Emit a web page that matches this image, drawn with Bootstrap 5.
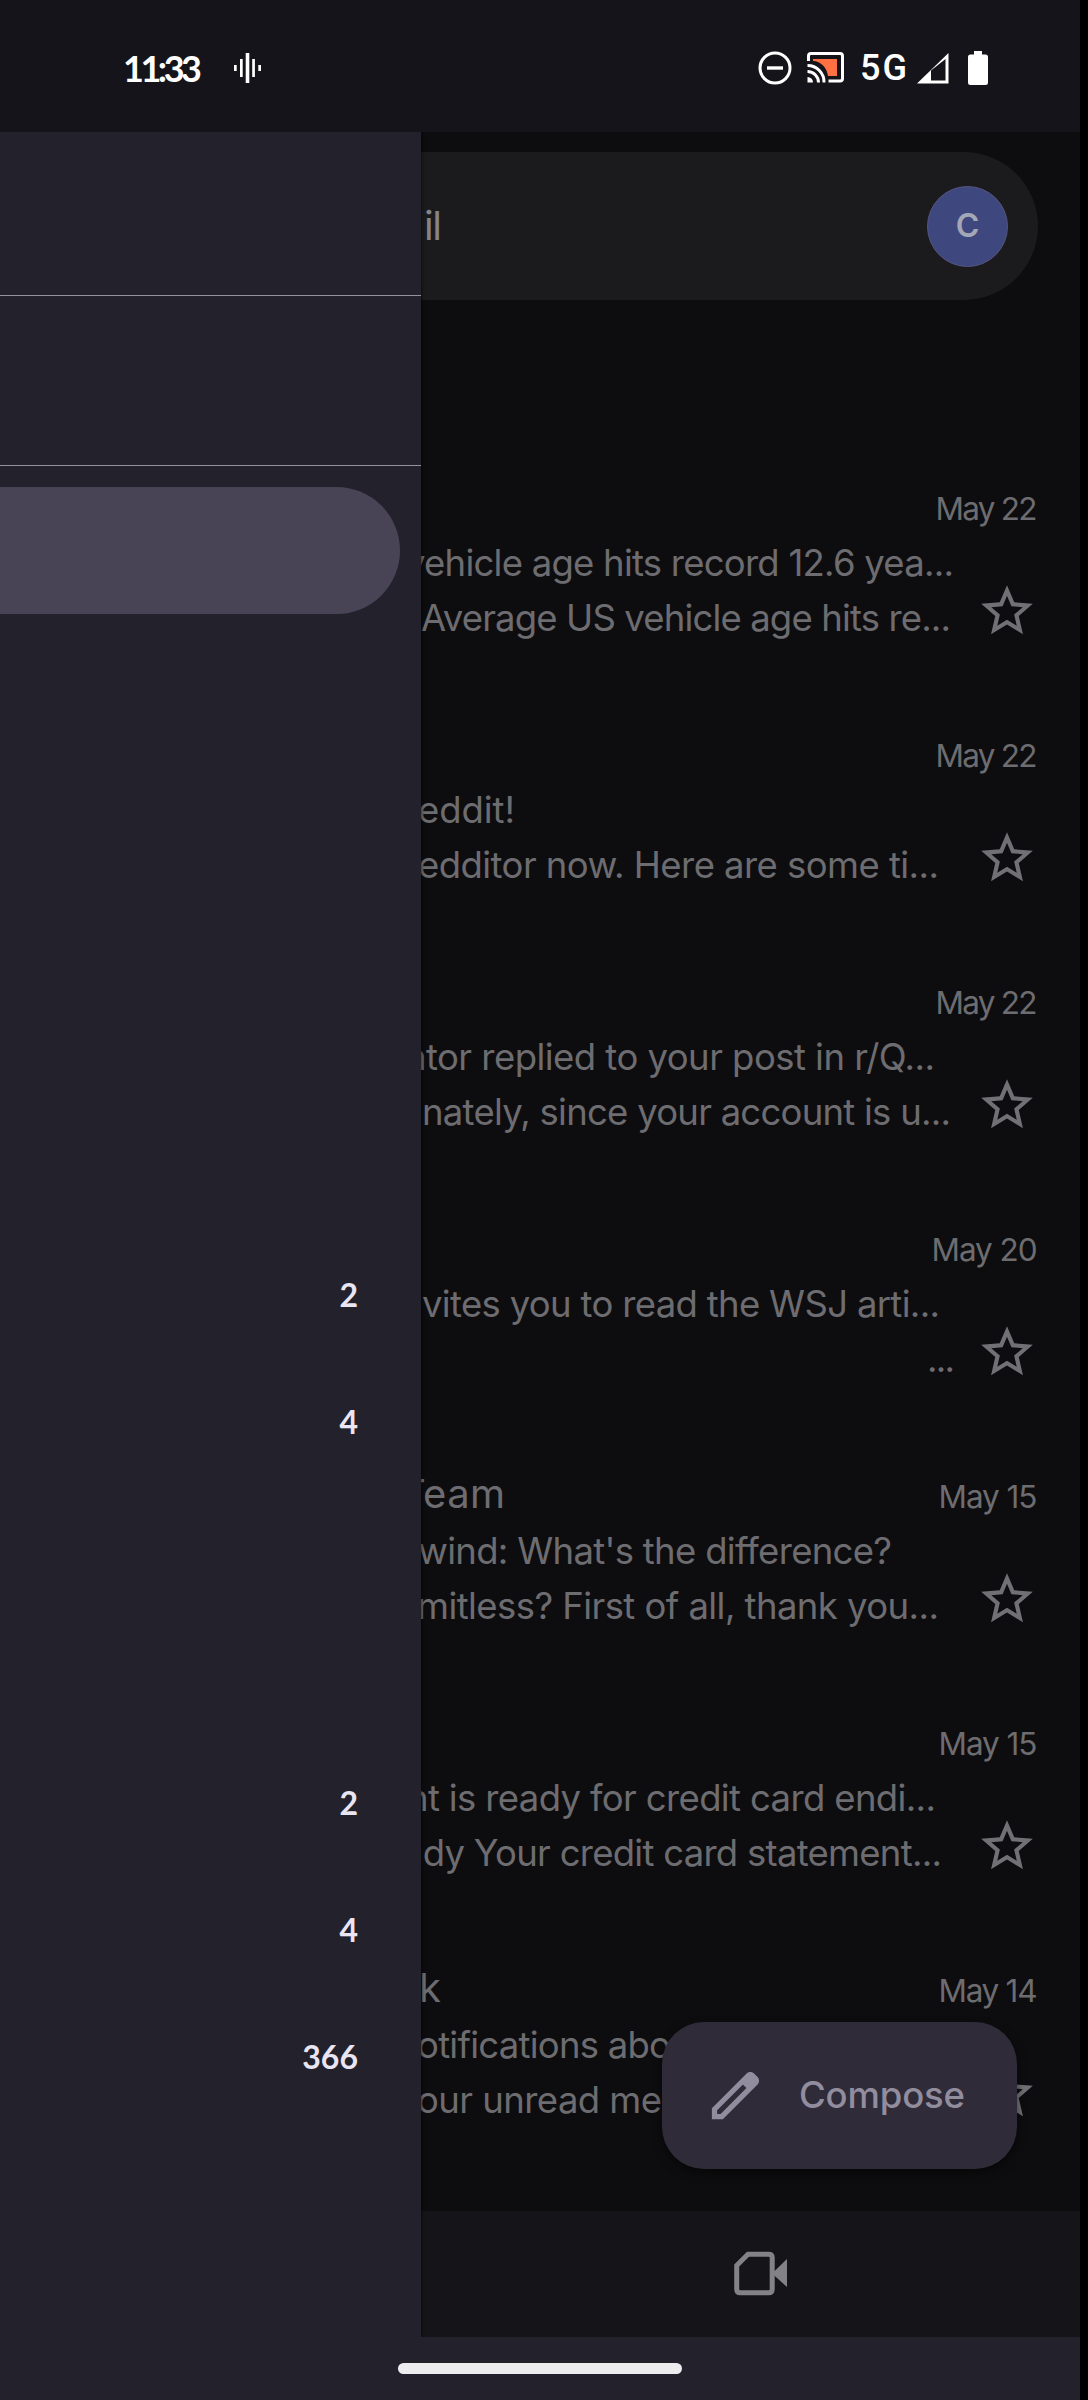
<!DOCTYPE html>
<html lang="en">
<head>
<meta charset="utf-8">
<title>Mail</title>
<link rel="stylesheet" href="https://cdn.jsdelivr.net/npm/bootstrap@5.3.0/dist/css/bootstrap.min.css">
<style>
html, body { margin: 0; background: #000; }
body { font-family: Inter, Roboto, "Liberation Sans", sans-serif; width: 1088px; height: 2400px; overflow: hidden; color: #6d6c70; }
svg { display: block; flex: none; }
.phone { width: 1080px; height: 2400px; background: #23212c; }
.statusbar { height: 132px; background: #15141a; color: #fff; padding: 3px 92px 0 123px; font-size: 36px; line-height: 40px; flex: none; }
.clock { font-weight: 600; width: 78px; margin-right: 33px; font-family: Lato, sans-serif; font-weight: 700; font-size: 36px; }
.statusicons { margin-left: auto; }
.net { width: 46px; margin: 0 10px 0 16px; font-weight: 500; font-family: Roboto, sans-serif; }
.app { height: 2205px; background: #0d0d0f; flex: none; }
.searchbar { height: 148px; margin: 20px 42px 179px 43px; border-radius: 74px; background: #1b1b1e; padding-right: 30px; color: #858488; font-size: 40px; padding-left: 381px; }
.avatar { width: 81px; height: 81px; border-radius: 50%; background: #3f477f; border: 1px solid #555681; color: #a4a7b5; font-size: 32px; font-weight: 600; }
.mail { height: 247px; padding-right: 42.5px; flex: none; }
.mailhead { height: 57px; line-height: 54px; }
.sender { font-size: 40px; }
.when { font-size: 31.5px; }
.mailtext { font-size: 36.5px; line-height: 54px; }
.mailtext > div { height: 55px; }
.fit { display: inline-block; white-space: pre; }
.star { padding-top: 44px; color: #717074; }
.tabs { height: 126px; background: #151418; margin-top: auto; color: #838286; padding-left: 729px; padding-bottom: 2px; flex: none; }
.compose { left: 662px; top: 1890px; width: 355px; height: 147px; border-radius: 42px; background: #2f2b39; color: #918d9e; font-size: 36.5px; font-weight: 500; box-shadow: 0 4px 10px rgba(0,0,0,.5); padding-left: 42px; }
.compose svg { margin-right: 32px; }
.drawer { left: 0; top: 0; width: 421px; height: 2205px; background: #23212c; color: #e9e5f3; font-family: Lato, sans-serif; font-size: 32px; font-weight: 700; box-shadow: 1px 0 3px rgba(0,0,0,.5); }
.drawer-title { height: 164px; border-bottom: 1px solid #95929d; }
.drawer-all { height: 170px; border-bottom: 1px solid #95929d; }
.selected { height: 127px; margin: 21px 21px 617px 0; border-radius: 0 64px 64px 0; background: #484456; }
.item { height: 127px; padding-right: 63px; }
.gesture { height: 63px; }
.handle { width: 284px; height: 11px; margin-top: 26px; border-radius: 6px; background: #ededf0; }
</style>
<script src="https://cdn.jsdelivr.net/npm/bootstrap@5.3.0/dist/js/bootstrap.bundle.min.js"></script>
</head>
<body>
<svg width="0" height="0" class="position-absolute">
  <symbol id="star" viewBox="0 0 24 24"><path fill="currentColor" d="M22 9.24l-7.19-.62L12 2 9.19 8.63 2 9.24l5.46 4.73L5.82 21 12 17.27 18.18 21l-1.63-7.03L22 9.24zM12 15.4l-3.76 2.27 1-4.28-3.32-2.88 4.38-.38L12 6.1l1.71 4.04 4.38.38-3.32 2.88 1 4.28L12 15.4z"/></symbol>
</svg>
<div class="phone d-flex flex-column">
  <header class="statusbar d-flex align-items-center">
    <span class="clock"><span class="fit" data-x="0" data-w="79">11:33</span></span>
    <svg width="27" height="30" viewBox="0 0 27 30" fill="#fff"><rect y="12" width="2.7" height="6"/><rect x="6" y="6" width="2.7" height="18"/><rect x="11.7" width="3.6" height="30"/><rect x="18.2" y="6" width="2.7" height="18"/><rect x="24.3" y="12" width="2.7" height="6"/></svg>
    <div class="statusicons d-flex align-items-center">
      <svg width="34" height="34" viewBox="0 0 34 34" fill="none" stroke="#fff" stroke-width="3"><circle cx="17" cy="17" r="15"/><path d="M9 17h16" stroke-width="3.4"/></svg>
      <svg width="37" height="31" viewBox="0 0 37 31" style="margin-left:15px" fill="none" stroke="#fff" stroke-width="3"><path d="M6 7h24v17h-9C20 16 14 9 6 9z" fill="#ff7143" stroke="none"/><path d="M1.500 9V4q0-2.500 2.500-2.500h29q2.500 0 2.500 2.500v22.500q0 2.500-2.500 2.500H21.500"/><path d="M.5 13.500A16.500 16.500 0 0 1 17 30.500M.5 19.500A11 11 0 0 1 11.500 30.500"/><path d="M.5 25a5.500 5.500 0 0 1 5.500 5.500H.5z" fill="#fff" stroke="none"/></svg>
      <span class="net"><span class="fit" data-x="0" data-w="47">5G</span></span>
      <svg width="34" height="32" viewBox="0 0 34 32"><path d="M1 31.500 32.500 1v30.500z" fill="#fff"/><path d="M15 18.500 29.500 7v21.500H15z" fill="#15141a"/></svg>
      <svg width="20" height="34" viewBox="0 0 20 34" style="margin-left:18px" fill="#fff"><path d="M6 0h8v3.500h3.500Q20 3.500 20 6v25.500q0 2.500-2.500 2.500h-15Q0 34 0 31.500V6Q0 3.500 2.500 3.500H6z"/></svg>
    </div>
  </header>

  <main class="app position-relative d-flex flex-column overflow-hidden">
    <div class="searchbar d-flex align-items-center justify-content-between flex-shrink-0"><span class="fit" data-w="18">il</span><div class="avatar d-flex align-items-center justify-content-center">C</div></div>

    <article class="mail"><div class="mailhead d-flex align-items-baseline justify-content-between"><span class="sender">&nbsp;</span><span class="when fit" data-w="102">May 22</span></div>
      <div class="d-flex justify-content-between"><div class="mailtext"><div><span class="fit" data-x="405" data-w="549">vehicle age hits record 12.6 yea...</span></div><div><span class="fit" data-x="421" data-w="530">Average US vehicle age hits re...</span></div></div><div class="star"><svg width="62" height="62"><use href="#star"/></svg></div></div></article>

    <article class="mail"><div class="mailhead d-flex align-items-baseline justify-content-between"><span class="sender">&nbsp;</span><span class="when fit" data-w="102">May 22</span></div>
      <div class="d-flex justify-content-between"><div class="mailtext"><div><span class="fit" data-x="418" data-w="97">eddit!</span></div><div><span class="fit" data-x="418" data-w="521">edditor now. Here are some ti...</span></div></div><div class="star"><svg width="62" height="62"><use href="#star"/></svg></div></div></article>

    <article class="mail"><div class="mailhead d-flex align-items-baseline justify-content-between"><span class="sender">&nbsp;</span><span class="when fit" data-w="102">May 22</span></div>
      <div class="d-flex justify-content-between"><div class="mailtext"><div><span class="fit" data-x="406" data-w="529">ator replied to your post in r/Q...</span></div><div><span class="fit" data-x="422" data-w="529">nately, since your account is u...</span></div></div><div class="star"><svg width="62" height="62"><use href="#star"/></svg></div></div></article>

    <article class="mail"><div class="mailhead d-flex align-items-baseline justify-content-between"><span class="sender">&nbsp;</span><span class="when fit" data-w="106">May 20</span></div>
      <div class="d-flex justify-content-between"><div class="mailtext"><div><span class="fit" data-x="422" data-w="518">vites you to read the WSJ arti...</span></div><div><span class="fit" data-x="927" data-w="28">...</span></div></div><div class="star"><svg width="62" height="62"><use href="#star"/></svg></div></div></article>

    <article class="mail"><div class="mailhead d-flex align-items-baseline justify-content-between"><span class="sender fit" data-x="400" data-w="105">Team</span><span class="when fit" data-w="99">May 15</span></div>
      <div class="d-flex justify-content-between"><div class="mailtext"><div><span class="fit" data-x="418" data-w="474">wind: What's the difference?</span></div><div><span class="fit" data-x="417" data-w="522">mitless? First of all, thank you...</span></div></div><div class="star"><svg width="62" height="62"><use href="#star"/></svg></div></div></article>

    <article class="mail"><div class="mailhead d-flex align-items-baseline justify-content-between"><span class="sender">&nbsp;</span><span class="when fit" data-w="99">May 15</span></div>
      <div class="d-flex justify-content-between"><div class="mailtext"><div><span class="fit" data-x="407" data-w="529">nt is ready for credit card endi...</span></div><div><span class="fit" data-x="403" data-w="539">ady Your credit card statement...</span></div></div><div class="star"><svg width="62" height="62"><use href="#star"/></svg></div></div></article>

    <article class="mail"><div class="mailhead d-flex align-items-baseline justify-content-between"><span class="sender fit" data-x="419" data-w="21">k</span><span class="when fit" data-w="99">May 14</span></div>
      <div class="d-flex justify-content-between"><div class="mailtext"><div><span class="fit" data-x="417" data-w="254">otifications abo</span></div><div><span class="fit" data-x="417" data-w="245">our unread me</span></div></div><div class="star"><svg width="62" height="62"><use href="#star"/></svg></div></div></article>

    <nav class="tabs d-flex align-items-center"><svg width="64" height="64" viewBox="0 0 64 64"><path d="M19 13.200 7.700 24.500V48q0 3.800 3.500 3.800h28.500q3.500 0 3.500-3.800V16.500q0-3.300-3.500-3.300z" fill="none" stroke="currentColor" stroke-width="5"/><path d="M43 32.500 58 18v28z" fill="currentColor"/></svg></nav>

    <div class="compose position-absolute d-flex align-items-center"><svg width="63" height="63" viewBox="0 0 24 24" fill="currentColor"><path d="M20.410 4.940l-1.350-1.350c-.78-.78-2.050-.78-2.830 0L3 16.820V21h4.180L20.410 7.770c.79-.78.79-2.050 0-2.830zM6.350 19H5v-1.350l9.820-9.820 1.350 1.350L6.350 19z"/></svg><span class="fit" data-w="166">Compose</span></div>

    <aside class="drawer position-absolute">
      <div class="drawer-title"></div><div class="drawer-all"></div><div class="selected"></div>
      <div class="item d-flex align-items-center justify-content-end">2</div>
      <div class="item d-flex align-items-center justify-content-end">4</div>
      <div class="item"></div><div class="item"></div>
      <div class="item d-flex align-items-center justify-content-end">2</div>
      <div class="item d-flex align-items-center justify-content-end">4</div>
      <div class="item d-flex align-items-center justify-content-end">366</div>
    </aside>
  </main>
  <footer class="gesture d-flex justify-content-center"><div class="handle"></div></footer>
</div>
<script>
// Track each label to its intended measure, and start it at its column offset.
document.querySelectorAll('.fit').forEach(function (el) {
  var w = +el.dataset.w, n = el.textContent.length, now = el.getBoundingClientRect().width;
  if (n > 1) {
    var gap = (w - now) / (n - 1);
    el.style.letterSpacing = gap + 'px';
    el.style.marginRight = -gap + 'px';
  }
  if (el.dataset.x) el.style.marginLeft = el.dataset.x + 'px';
});
</script>
</body>
</html>
